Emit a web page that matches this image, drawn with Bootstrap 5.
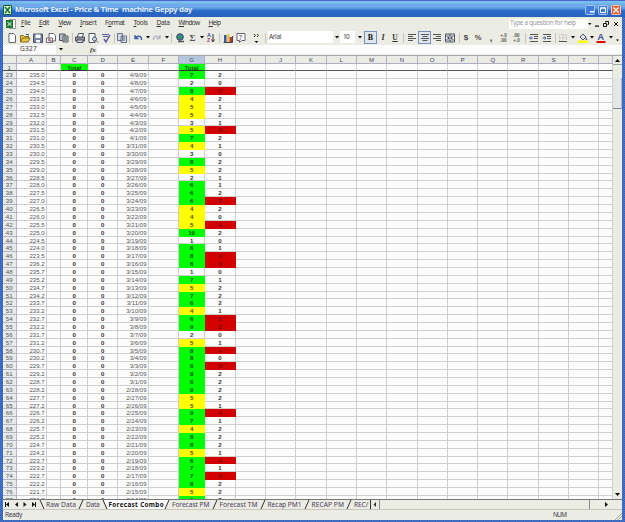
<!DOCTYPE html>
<html lang="en">
<head>
<meta charset="utf-8">
<title>Microsoft Excel - Price &amp; Time machine Geppy day</title>
<link href="https://cdn.jsdelivr.net/npm/bootstrap@5.3.0/dist/css/bootstrap.min.css" rel="stylesheet">
<style>
:root{--dither:repeating-conic-gradient(#f4ead8 0 25%,#e4edf0 0 50%) 0 0/2px 2px}
body{width:625px;height:522px;margin:0;overflow:hidden;font-family:"Noto Sans","Liberation Sans",sans-serif;font-size:6.6px;line-height:1;color:#333}
.win{width:625px;height:522px;background:repeating-conic-gradient(#2b5fbd 0 25%,#5478c8 0 50%) 0 0/2px 2px;padding:0 3px 2px}
.titlebar{height:17px;margin:0 -3px;padding:2px 3px 0;background:linear-gradient(#4a68c8 0 1px,#78bdf0 1px 3px,#6eaae8 4px 7px,#4a8bdc 9px,#2668c8 11px,#2a62bd 17px)}
.titletext{color:#f2f6ff;font-weight:600;font-size:7.8px}
.capbtn{width:10px;height:10px;border:1px solid #a9c8f3;border-radius:1.5px;background:#3f7ee0}
.capbtn.closer{background:#e0603c;border-color:#f7c7b8}
.dith{background:var(--dither)}
.fit{display:inline-block;white-space:nowrap;flex:none}
.menubar{height:13px}.menuitem{flex:none}
.ask{width:79px;height:10px;background:#fff;color:#999;font-size:6.4px;padding-left:1px}
.tools{height:15px;padding-top:1px}
.tool{flex:none;height:13px;display:flex;align-items:center;justify-content:center}
.tool svg{width:10px;height:10px;overflow:visible}
.tool.pressed{border:1px solid #7890bb;background:#dfe6ef;height:13px}
.combo{background:#fff;height:12px;justify-content:flex-start;padding-left:1px;color:#444}
.sep::before{content:"";width:1px;height:10px;background:#c6c5bd}
.formula{height:9px;background:#fdfdfd}
.grid{height:444px;background:#fdfdfd;font-family:"Liberation Sans",Arial,sans-serif;font-size:6.1px;overflow:hidden;border-top:1px solid #aaa8b4}
.sheet{width:610px;flex:none;overflow:hidden}
.line{display:grid;grid-template-columns:13.5px 30.2px 14.8px 26.5px 30.3px 30.3px 30.4px 26.3px 30.4px repeat(12,30.32px) 14px;height:7.86px;line-height:7px}
.line>div{border-right:1px solid #cfcfcf;border-bottom:1px solid #cfcfcf;overflow:hidden;text-align:center;white-space:nowrap;color:#333}
.line.heads{height:7.6px}
.line.heads>div{background:#ebebe6;border-color:#aeb0c4;color:#454565}
.line.heads>div.sel{background:#b4c6dc}
.line>div.rh{background:#e9eaea;border-color:#b4b4c2;color:#555}
.line.frozen>div{border-bottom-color:#555}
.line>div.num{text-align:right;padding-right:1px;color:#555}
.line>div.bd{font-weight:700}
.line>div.g{background:#0f0;border-color:#0f0;color:#064a06}
.line>div.y{background:#ff0;border-color:#ff0;color:#554a00}
.line>div.r{background:#d20000;border-color:#d20000;color:#6e0000}
.line.frozen>div.g{border-bottom-color:#333}
.vbar{width:9px;flex:none}
.sbtn{height:9px;display:flex;align-items:center;justify-content:center;border-bottom:1px solid #9aa}
.vthumb{height:31px;margin-top:13px;background:#e3e7e5;border-bottom:1px solid #85859a;border-right:1px solid #b6b6c4}
.tabs{height:10px;border-top:1px solid #777}
.tabs>*{flex:none}.tabs svg{display:block}
.tabtxt{color:#4a3d5a;height:9px;line-height:9px}
.active-tab{background:#fff;color:#111;font-weight:700;font-size:6.3px}
.hthumb{width:211px;height:9px;border-left:1px solid #888;border-right:1px solid #888}
.status{height:11px;border-top:1px solid #c9c7bd;color:#445}
</style>
<script src="https://cdn.jsdelivr.net/npm/bootstrap@5.3.0/dist/js/bootstrap.bundle.min.js"></script>
</head>
<body>
<div class="win d-flex flex-column">
  <div class="titlebar d-flex align-items-center">
    <svg width="9" height="10" viewBox="0 0 9 10" class="flex-shrink-0"><path fill="#e7f3e5" stroke="#126326" d="M.5.5h8v9h-8z"/><path stroke="#157b2d" stroke-width="1.8" d="M2 2l5 6M7 2L2 8"/></svg>
    <span class="fit titletext" style="margin-left:3px" data-w="177">Microsoft Excel - Price &amp; Time&nbsp; machine Geppy day</span>
    <div class="d-flex ms-auto" style="gap:3px;padding-right:1px">
      <div class="capbtn d-flex align-items-end ps-1"><svg width="4" height="3"><path fill="#fff" d="M0 0h4v1.5H0z"/></svg></div>
      <div class="capbtn d-flex align-items-center justify-content-center"><svg width="6" height="6"><path fill="none" stroke="#fff" d="M.5 1h5v4.5h-5zM0 1h6"/></svg></div>
      <div class="capbtn closer d-flex align-items-center justify-content-center"><svg width="6" height="6"><path stroke="#fff" stroke-width="1.3" d="M.5.5l5 5M5.500.5l-5 5"/></svg></div>
    </div>
  </div>
  <div class="menubar dith d-flex align-items-center">
    <svg style="margin-left:3px;margin-right:5px" class="flex-shrink-0" width="10" height="10"><path fill="#fff" stroke="#999" d="M3.500.5h6v9h-6z"/><path fill="#1c7a32" d="M0 1h7v8H0z"/><path stroke="#fff" d="M1.500 3l4 4M5.500 3l-4 4"/></svg>
    <div id="menu" class="d-flex"></div>
    <div class="ask ms-auto d-flex align-items-center"><span class="fit" data-w="66">Type a question for help</span></div>
    <svg class="flex-shrink-0" width="34" height="10"><path fill="#111" d="M0 4h3.500L1.750 6zM7 6.500h4v1.300H7z"/><path fill="none" stroke="#111" d="M17.500 3.500v-1h3v3h-1M15.500 4.500h3v3h-3zM26 3l4 4M30 3l-4 4"/></svg>
  </div>
  <div class="tools dith d-flex" id="tools"></div>
  <div class="formula d-flex align-items-center">
    <div class="d-flex" style="width:53px;padding-left:17px"><span class="fit" data-w="17">G327</span></div>
    <div class="dith d-flex align-items-center" style="width:41px;height:9px;padding-left:3px"><svg width="4" height="3"><path d="M0 0h4L2 2.500z"/></svg><span style="margin-left:27px;font:italic 700 7px 'Liberation Serif',serif">fx</span></div>
  </div>
  <div class="dith" style="height:1px"></div>
  <div class="grid d-flex">
    <div class="sheet" id="sheet"></div>
    <div class="vbar dith d-flex flex-column">
      <div class="sbtn"><svg width="5" height="3"><path d="M0 3h5L2.500 0z"/></svg></div>
      <div class="vthumb"></div>
      <div class="sbtn mt-auto border-0"><svg width="5" height="3"><path d="M0 0h5L2.500 3z"/></svg></div>
    </div>
  </div>
  <div class="tabs dith d-flex align-items-center" id="tabs"></div>
  <div class="status dith d-flex align-items-center" style="padding-left:2px">
    <span class="fit" data-w="17">Ready</span>
    <span class="fit ms-auto" data-w="13">NUM</span>
    <svg style="margin-left:47px" width="9" height="10"><path stroke="#aaa696" d="M2 10l7-7M5 10l4-4"/></svg>
  </div>
</div>
<script>
const $id = i => document.getElementById(i);
// menu: label, text width, slot width
$id('menu').innerHTML = [['File',9.5,18],['Edit',10,19.5],['View',12,21.5],['Insert',16.5,25],['Format',19.5,28.500],['Tools',14,23],['Data',13,22],['Window',21,30],['Help',12,14]]
  .map(([t,w,s]) => `<div class="menuitem" style="width:${s}px"><span class="fit" data-w="${w}">${t==='Format'?'F<u>o</u>rmat':`<u>${t[0]}</u>${t.slice(1)}`}</span></div>`).join('');

const svg = b => `<svg viewBox="0 0 10 10" fill="none" stroke="#4b5261">${b}</svg>`;
const arrow = `<svg viewBox="0 0 4 3" style="width:4px;height:3px"><path d="M0 0h4L2 2.500z"/></svg>`;
const lines = d => svg(`<path stroke="#555" d="${d}"/>`);
const items = [
 [3,''],
 [11,svg('<path fill="#fff" stroke="#666" d="M2 .5h4.500L8.500 2.500v7H2z"/>')],
 [15,svg('<path fill="#e8c53c" stroke="#806c20" d="M.5 9V2.500h3l1 1h4V5M.5 9l2-4h7.500L8 9z"/><path stroke="#356" d="M6 1.500h2.500v1"/>')],
 [12,svg('<path fill="#79839e" stroke="#4a5068" d="M.5 1h9v8.500h-9z"/><path fill="#fff" stroke="none" d="M2.500 1.500h5V5h-5zM3 7h4v2.500H3z"/>')],
 [14,svg('<path fill="#fff" stroke="#667" d="M3 .5h4.500L9.500 2.500V8H3zM.5 5h6v4.500h-6z"/><path stroke="#c44" d="M2 7h3"/>')],
 [12,svg('<path fill="#b9c0cc" d="M.5 1h5.500v6.500H.5z"/><path fill="#d8dcc2" d="M4 3h5v6H4z"/><path stroke="#246" d="M5 5h3M5 7h3"/>')],
 [4,'','sep'],
 [12,svg('<path fill="#fff" d="M2.500 4l1-3.500h5L7.500 4"/><path fill="#8b8d93" d="M.5 4h9v4h-9z"/><path fill="#ddd" d="M2 7h6v2.500H2z"/>')],
 [14,svg('<path fill="#fff" d="M1 .5h6v9H1z"/><circle cx="6.500" cy="6" r="2" fill="#cfe1ec"/><path d="M8 7.500L10 9.500"/>')],
 [12,svg('<path stroke="#4b5b9b" d="M1 1.500h7M2 3.500h5"/><path stroke="#5a4fa8" stroke-width="1.400" d="M3 6l2 3 4-7"/>')],
 [4,'','sep'],
 [12,svg('<path fill="#d5d9e4" stroke="#69718a" d="M.5.5h5v7h-5zM4 3h5.500v6.500H4zM5.500 5h2.500M5.500 7h2.500"/>')],
 [3,'','sep'],
 [13,svg('<path stroke="#3d58a8" stroke-width="1.300" d="M2 2v3.500h3.500M2 5c3-3 7-2 6.500 2"/>')],
 [7,arrow],
 [12,svg('<path stroke="#b4b8c4" stroke-width="1.300" d="M8 2v3.500H4.500M8 5C5 2 1 3 1.500 7"/>')],
 [7,arrow],[3,'','sep'],
 [13,svg('<circle cx="5" cy="4" r="3.300" fill="#3f86a4" stroke="#345"/><path stroke="#2d9b46" stroke-width="2" d="M3 3l3 2"/><path stroke="#555" stroke-width="1.500" d="M3 8.500h6"/>')],
 [13,'<span style="font:700 9px \'Liberation Serif\',serif;color:#555">Σ</span>'],
 [6,arrow],
 [12,'<span style="font:700 5.5px/5px \'Liberation Sans\';color:#3650a6">A<br><span style="color:#a33a6c">Z</span></span><svg viewBox="0 0 4 10" style="width:4px" fill="none" stroke="#333"><path d="M2 1v7M.5 6.500L2 9l1.500-2.500"/></svg>'],
 [4,'','sep'],
 [13,svg('<path fill="#3657aa" stroke="none" d="M1 2h2.500v7H1z"/><path fill="#f0c531" stroke="none" d="M4 1h2.500v8H4z"/><path fill="#a73d3d" stroke="none" d="M6.500 4H9v5H6.500z"/><path stroke="#445" d="M.5 9.500h9V3"/>')],
 [14,svg('<path fill="#fff" stroke="#667" d="M1 .5h8v7H5.500l-2 2v-2H1z"/>').replace('</svg>','<text x="3" y="6.500" font-size="7" stroke="none" fill="#445">?</text></svg>')],
 [15,svg('<path stroke="#222" d="M3 1l1.500 1.500L3 4M6 1l1.500 1.500L6 4"/><path fill="#111" stroke="none" d="M3.500 8h4l-2 2z"/>')],
 [5,'','sep'],
 [65,'<span class="fit" data-w="12">Arial</span>','combo'],[7,arrow],
 [15,'<span class="fit" data-w="6" style="margin-left:2px">10</span>','combo'],[9,arrow],
 [13,'<b style="font:900 8px \'Liberation Serif\',serif;color:#111">B</b>','pressed'],
 [12,'<i style="font:italic 700 8px \'Liberation Serif\',serif">I</i>'],
 [12,'<u style="font:700 7.500px \'Liberation Serif\',serif">U</u>'],
 [5,'','sep'],
 [12,lines('M1 1.500h8M1 3.500h5M1 5.500h8M1 7.500h5')],
 [13,lines('M1 1.500h8M2.500 3.500h5M1 5.500h8M2.500 7.500h5'),'pressed'],
 [12,lines('M1 1.500h8M4 3.500h5M1 5.500h8M4 7.500h5')],
 [14,svg('<path fill="#fff" d="M.5 1h9v8h-9zM.5 3h9M.5 7h9M5 1v2M5 7v2"/><path stroke="#446" d="M2 5h6M3.500 4v2M6.500 4v2"/>')],
 [4,'','sep'],
 [10,'<b style="font:700 8px \'Liberation Sans\';color:#444">$</b>'],
 [14,'<b style="font:700 7.500px \'Liberation Sans\';color:#555">%</b>'],
 [12,'<b style="font:700 9px \'Liberation Sans\';color:#444">,</b>'],
 [13,'<span style="font:700 4.500px/5px \'Liberation Sans\';color:#555">+.0<br>.00</span>'],
 [13,'<span style="font:700 4.500px/5px \'Liberation Sans\';color:#555">.00<br>+.0</span>'],
 [5,'','sep'],
 [12,svg('<path stroke="#555" d="M1 1.500h8M5 3.500h4M5 5.500h4M1 8.500h8"/><path stroke="#3c59ab" d="M4 5H.5M2 3.500L.5 5 2 6.500"/>')],
 [13,svg('<path stroke="#555" d="M1 1.500h8M5 3.500h4M5 5.500h4M1 8.500h8"/><path stroke="#3c59ab" d="M.5 5H4M2.500 3.500L4 5 2.500 6.500"/>')],
 [5,'','sep'],
 [10,svg('<path stroke="#bbb" stroke-dasharray="1 1" d="M1.500 8V1.500h7V8M5 1.500V8M1.500 5h7"/><path stroke="#555" d="M1 8.500h8"/>')],
 [9,arrow],
 [12,svg('<path fill="#dde2ec" d="M2 4l3-3 3 3-3 3z"/><path fill="#557" stroke="none" d="M8 4l1.500 3H7.500z"/><path fill="#ff0" stroke="none" d="M0 7.500h10V10H0z"/>')],
 [6,arrow],
 [12,svg('<path fill="#e00000" stroke="none" d="M.5 8h9v2h-9z"/>').replace('</svg>','<text x="1.500" y="7" font-size="9" font-weight="700" font-family="Liberation Sans" stroke="none" fill="#3a4f93">A</text></svg>')],
 [7,arrow],
 [6,'<svg viewBox="0 0 4 3" style="width:3px;height:3px;margin-top:6px"><path d="M0 0h4L2 2.500z"/></svg>']
];
$id('tools').innerHTML = items.map(([w,b,c='']) => `<div class="tool ${c}" style="width:${w}px">${b}</div>`).join('');

// worksheet
const letters = 'ABCDEFGHIJKLMNOPQRSTU'.split('');
let html = '<div class="line heads"><div></div>' + letters.map(l => `<div class="${l==='G'?'sel':''}">${l==='U'?'':l}</div>`).join('') + '</div>';
const rest = '<div></div>'.repeat(13);
html += `<div class="line frozen"><div class="rh">1</div><div></div><div></div><div class="g bd">Total</div><div></div><div></div><div></div><div class="g bd">Total</div><div></div>${rest}</div>`;
const G = [7,2,8,4,5,5,3,5,7,4,3,8,5,2,6,6,6,4,4,5,10,1,6,8,6,1,7,5,7,6,4,6,9,2,5,8,8,6,8,6,9,5,5,9,7,4,8,8,5,6,7,7,8,5,8];
const H = [2,0,3,2,1,2,1,3,2,1,0,2,2,1,1,2,3,2,0,4,2,0,1,3,3,0,1,2,2,2,1,3,3,0,1,4,0,3,2,2,2,2,1,4,1,2,2,2,1,4,1,3,2,2,2];
G.forEach((g,i) => {
  const a = (i < 24 ? 235 - i*.5 : 236.2 - (i-24)*.5).toFixed(1);
  const d = new Date(Date.UTC(2009,3,9-i));
  const date = `${d.getUTCMonth()+1}/${d.getUTCDate()}/09`;
  html += `<div class="line"><div class="rh">${23+i}</div><div class="num">${a}</div><div></div><div class="bd">0</div><div class="bd">0</div><div class="num">${date}</div><div></div><div class="bd ${g>5?'g':g>3?'y':''}">${g}</div><div class="bd ${H[i]>2?'r':''}">${H[i]}</div>${rest}</div>`;
});
$id('sheet').innerHTML = html;

// sheet tabs
const nav = d => `<svg width="9" height="9"><path fill="#111" d="${d}"/></svg>`;
const cut = r => `<svg width="${r?7:10}" height="9"><path stroke="#333" d="${r?'M1 0l4 9':'M7 0L3 9'}"/></svg>`;
const tab = (t,w,c='') => `<span class="fit tabtxt ${c}" data-w="${w}">${t}</span>`;
$id('tabs').innerHTML = nav('M2 2h1v5H2zM6 2v5L3 4.500z')+nav('M6 2v5L3 4.500z')+nav('M2.500 2v5l3-2.500z')+nav('M2 2v5l3-2.500zM5 2h1v5H5z')
 + cut(1)+tab('Raw Data',30)+cut()+tab('Data',13.5)+'<svg width="9" height="9"><path fill="#fff" d="M3 0h6v9H7z"/><path stroke="#222" d="M3 0l4 9"/></svg>'
 + tab('Forecast Combo',55.5,'active-tab')+'<svg width="8" height="9"><path fill="#fff" d="M0 0h5L1 9H0z"/><path stroke="#333" d="M5 0L1 9"/></svg>'+tab('Forecast PM',37.5)+cut()+tab('Forecast TM',38)+cut()+tab('Recap PM1',34)+cut()+tab('RECAP PM',32.500)+cut()+tab('REC/',14)
 + '<svg width="9" height="9"><path fill="#333" d="M2 0h1v9H2zM8 2v5L5.500 4.500z"/></svg><div style="width:2px"></div><div class="hthumb"></div><div style="width:13px"></div><svg width="8" height="9"><path fill="#111" d="M2 2v5l3-2.500z"/></svg>';

// spread each label over its intended width
document.querySelectorAll('.fit').forEach(e => {
  const n = e.textContent.length;
  e.style.letterSpacing = ((+e.dataset.w - e.getBoundingClientRect().width) / n) + 'px';
});
</script>
</body>
</html>
